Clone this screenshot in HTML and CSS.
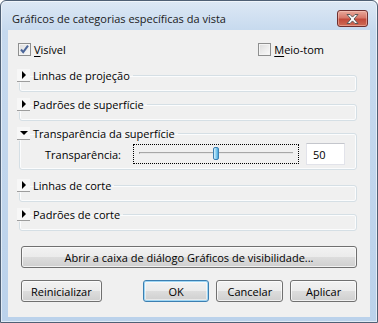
FILE: index.html
```html
<!DOCTYPE html>
<html lang="pt">
<head>
  <meta charset="UTF-8" />
  <title>Gráficos de categorias específicas da vista</title>
  <link rel="stylesheet" href="styles.css">
</head>
<body>
  <div class="window">
    <div class="titlebar">
      <span class="title">Gráficos de categorias específicas da vista</span>
      <button class="close" aria-label="Fechar">
        <svg width="13" height="10" viewBox="0 0 13 10">
          <path d="M1 0.5h3l2.5 2.6 2.5-2.6h3l-4 4.5 4 4.5h-3l-2.5-2.6-2.5 2.6h-3l4-4.5z" fill="#fff" stroke="#5a5a5a" stroke-width="1" stroke-linejoin="round"/>
        </svg>
      </button>
    </div>

    <div class="client">
      <div class="checks">
        <label class="check">
          <span class="box">
            <svg width="11" height="11" viewBox="0 0 11 11">
              <path d="M2 5.5l2.2 2.6 4.8-6.4" fill="none" stroke="#4b6699" stroke-width="2"/>
            </svg>
          </span>
          <span><u>V</u>isível</span>
        </label>
        <label class="check">
          <span class="box"></span>
          <span><u>M</u>eio-tom</span>
        </label>
      </div>

      <fieldset class="group">
        <legend><span class="toggle"><span class="arrow"></span></span>Linhas de projeção</legend>
      </fieldset>

      <fieldset class="group">
        <legend><span class="toggle"><span class="arrow"></span></span>Padrões de superfície</legend>
      </fieldset>

      <fieldset class="group open">
        <legend><span class="toggle"><span class="arrow down"></span></span>Transparência da superfície</legend>
        <div class="row">
          <span class="label">Transparência:</span>
          <div class="slider">
            <div class="track"></div>
            <div class="thumb" style="left: 50%"></div>
          </div>
          <div class="field">50</div>
        </div>
      </fieldset>

      <fieldset class="group">
        <legend><span class="toggle"><span class="arrow"></span></span>Linhas de corte</legend>
      </fieldset>

      <fieldset class="group">
        <legend><span class="toggle"><span class="arrow"></span></span>Padrões de corte</legend>
      </fieldset>

      <button class="btn wide">Abrir a caixa de diálogo Gráficos de visibilidade...</button>

      <div class="actions">
        <button class="btn reset">Reinicializar</button>
        <button class="btn ok">OK</button>
        <button class="btn">Cancelar</button>
        <button class="btn">Aplicar</button>
      </div>
    </div>
  </div>
</body>
</html>
```

FILE: styles.css
```css
* {
  box-sizing: border-box;
}

body {
  margin: 0;
  background: #fff;
  font-family: "Open Sans", "Noto Sans", sans-serif;
  font-size: 11px;
  color: #000;
}

.window {
  width: 378px;
  height: 323px;
  border: 1px solid #4f6075;
  border-radius: 6px 6px 0 0;
  background: linear-gradient(to bottom, #dde8f5 0, #c6d9ee 30px, #bbd2eb 100%);
  box-shadow: inset 0 0 0 1px rgba(255, 255, 255, 0.55);
}

.titlebar {
  height: 29px;
  display: flex;
  align-items: flex-start;
  justify-content: space-between;
  padding: 0 9px 0 11px;
}

.title {
  margin-top: 10px;
  font-size: 11px;
  color: #1a1a1a;
}

.close {
  margin-top: 9px;
  width: 31px;
  height: 17px;
  padding: 0;
  border: 1px solid #6e3030;
  border-radius: 3px;
  background: linear-gradient(to bottom, #e9a99b 0, #d7786a 45%, #c24a3b 55%, #cf6c55 100%);
  box-shadow: inset 0 0 0 1px rgba(255, 210, 200, 0.45);
  display: flex;
  align-items: center;
  justify-content: center;
}

.client {
  margin: 0 7px;
  height: 287px;
  background: #f0f0f0;
  padding: 12px 13px 0 11px;
}

/* checkboxes */
.checks {
  display: flex;
  justify-content: space-between;
  height: 15px;
  padding-right: 33px;
}

.check {
  display: flex;
  align-items: center;
  gap: 3px;
  margin-left: -1px;
}

.check u {
  text-decoration-thickness: 1px;
  text-underline-offset: 2px;
}

.box {
  width: 13px;
  height: 13px;
  border: 1px solid #8e8f8f;
  background: linear-gradient(135deg, #dcdcdc, #fbfbfb);
  box-shadow: inset 0 0 0 1px #f4f4f4;
  display: flex;
  align-items: center;
  justify-content: center;
}

/* collapsible groups */
.group {
  margin: 11px 0 0;
  padding: 0 0 8px;
  border: 1px solid #d5dfe5;
  border-radius: 3px;
  box-shadow: inset 0 0 0 1px #fbfcfd;
  min-width: 0;
}

.group + .group {
  margin-top: 5px;
}

.group.open {
  padding: 2px 0 4px;
}

.group.open + .group {
  margin-top: 8px;
}

legend {
  margin-left: -3px;
  padding: 0 3px 0 0;
  height: 15px;
  display: flex;
  align-items: center;
  gap: 3px;
  line-height: 15px;
}

.toggle {
  width: 13px;
  height: 13px;
  background: #f7f7f7;
  border-bottom: 1px solid #9d9d9d;
  display: flex;
  align-items: center;
  justify-content: center;
}

.arrow {
  width: 0;
  height: 0;
  border-left: 4px solid #000;
  border-top: 4px solid transparent;
  border-bottom: 4px solid transparent;
  margin-left: 1px;
}

.arrow.down {
  border-left: 4px solid transparent;
  border-right: 4px solid transparent;
  border-top: 4px solid #000;
  border-bottom: 0;
  margin-left: 1px;
}

.row {
  display: flex;
  align-items: center;
  height: 22px;
  padding-left: 25px;
}

.label {
  width: 88px;
}

.slider {
  position: relative;
  width: 166px;
  height: 20px;
  border: 1px dotted #000;
  margin-right: 7px;
}

.track {
  margin: 7px 5px 0;
  height: 2px;
  border-top: 1px solid #a7a7a7;
  border-bottom: 1px solid #e6e6e6;
  border-left: 1px solid #7a7a7a;
}

.thumb {
  position: absolute;
  top: 2px;
  width: 6px;
  height: 13px;
  margin-left: -3px;
  border: 1px solid #3c7fb1;
  border-radius: 2px;
  background: linear-gradient(to right, #d6f0fc, #7fc9ee 60%, #4aa8dc);
}

.field {
  width: 39px;
  height: 22px;
  background: #fff;
  border: 1px solid #e2e3ea;
  border-top-color: #c4c6cc;
  padding: 3px 0 0 6px;
}

/* buttons */
.btn {
  font-family: inherit;
  font-size: 11px;
  color: #000;
  height: 22px;
  padding: 0;
  border: 1px solid #707070;
  border-radius: 3px;
  background: linear-gradient(to bottom, #f2f2f2 0, #ebebeb 50%, #dddddd 50%, #cfcfcf 100%);
  box-shadow: inset 0 0 0 1px rgba(255, 255, 255, 0.7);
}

.wide {
  display: block;
  width: 336px;
  margin: 15px 0 0 2px;
}

.actions {
  display: flex;
  gap: 7px;
  margin: 12px 0 0 2px;
}

.actions .btn {
  width: 67px;
}

.actions .reset {
  width: 81px;
  margin-right: 34px;
}

.actions .ok {
  border-color: #3c7fb1;
  box-shadow: inset 0 0 0 1px #9fd6f4, inset 0 0 0 2px rgba(255, 255, 255, 0.5);
}
```
